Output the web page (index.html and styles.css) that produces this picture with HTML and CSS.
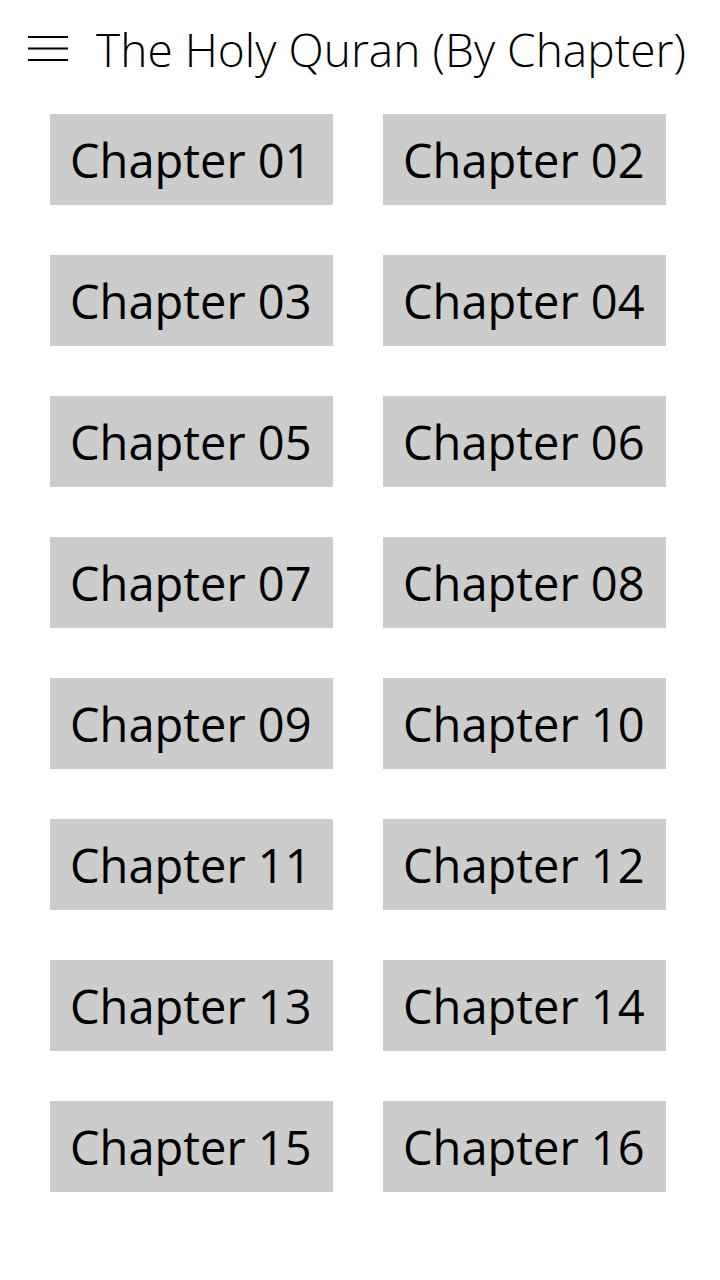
FILE: index.html
```html
<!DOCTYPE html>
<html lang="en">
<head>
<meta charset="utf-8">
<title>The Holy Quran (By Chapter)</title>
<link rel="stylesheet" href="styles.css">
</head>
<body>
<header class="topbar">
  <button class="menu" aria-label="Menu">
    <svg width="40" height="26" viewBox="0 0 40 26"><path d="M0 1H40M0 12.5H40M0 24H40" stroke="#000" stroke-width="2" fill="none"/></svg>
  </button>
  <h1 class="title">The Holy Quran (By Chapter)</h1>
</header>
<main class="grid">
  <button class="chapter">Chapter 01</button>
  <button class="chapter">Chapter 02</button>
  <button class="chapter">Chapter 03</button>
  <button class="chapter">Chapter 04</button>
  <button class="chapter">Chapter 05</button>
  <button class="chapter">Chapter 06</button>
  <button class="chapter">Chapter 07</button>
  <button class="chapter">Chapter 08</button>
  <button class="chapter">Chapter 09</button>
  <button class="chapter">Chapter 10</button>
  <button class="chapter">Chapter 11</button>
  <button class="chapter">Chapter 12</button>
  <button class="chapter">Chapter 13</button>
  <button class="chapter">Chapter 14</button>
  <button class="chapter">Chapter 15</button>
  <button class="chapter">Chapter 16</button>
</main>
</body>
</html>
```

FILE: styles.css
```css
html, body {
  margin: 0;
  padding: 0;
  background: #ffffff;
  color: #000000;
  font-family: "Open Sans", "Noto Sans", sans-serif;
}
.topbar {
  display: flex;
  align-items: center;
  height: 98px;
  padding-left: 28px;
  box-sizing: border-box;
}
.menu {
  display: flex;
  padding: 0;
  margin: 0;
  border: 0;
  background: none;
  width: 40px;
  height: 26px;
}
.title {
  margin: 0 0 0 28px;
  font-size: 46px;
  font-weight: 300;
  line-height: 1;
  letter-spacing: 0.05px;
  white-space: nowrap;
}
.grid {
  display: grid;
  grid-template-columns: 283px 283px;
  grid-auto-rows: 91px;
  column-gap: 50px;
  row-gap: 50px;
  padding: 16px 0 0 50px;
}
.chapter {
  margin: 0;
  border: 0;
  background: #cccccc;
  color: #000;
  font-family: "Open Sans", "Noto Sans", sans-serif;
  font-size: 47px;
  font-weight: 400;
  padding: 0 0 0 20px;
  text-align: left;
  white-space: nowrap;
  overflow: hidden;
}
```
